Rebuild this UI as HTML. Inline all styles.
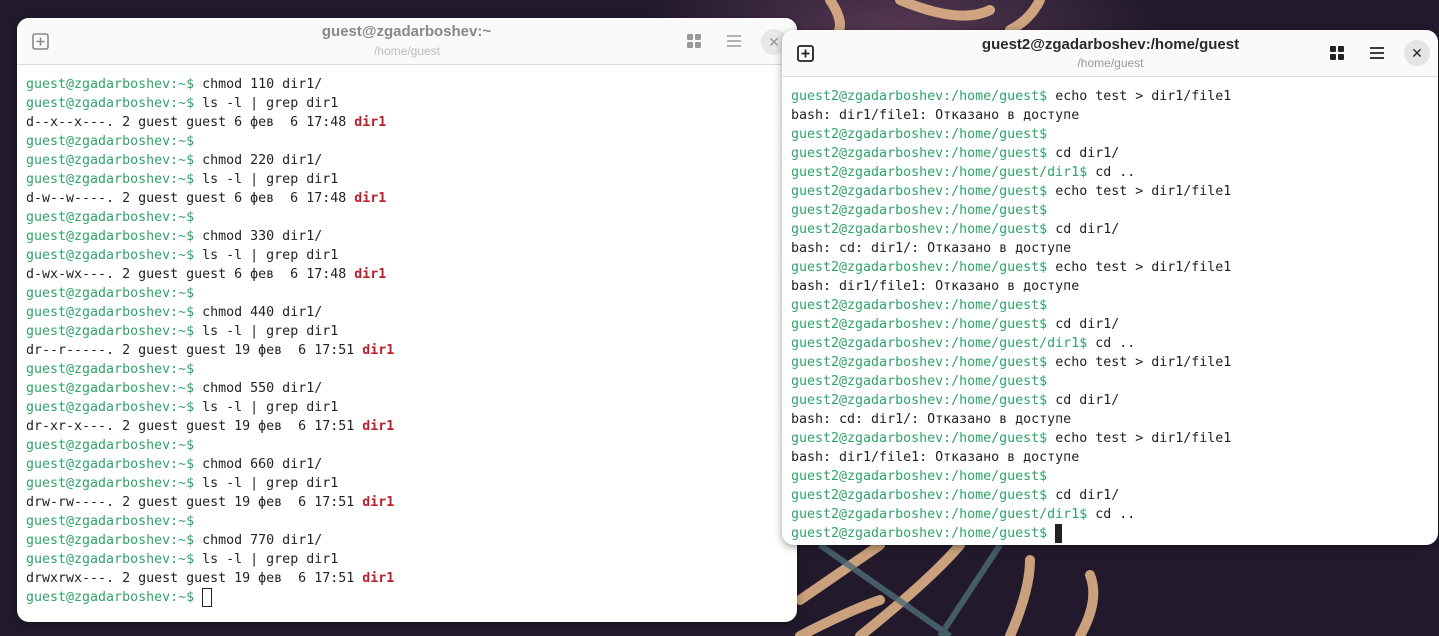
<!DOCTYPE html>
<html><head><meta charset="utf-8"><style>
*{margin:0;padding:0;box-sizing:border-box}
body{width:1439px;height:636px;overflow:hidden;background:#221a2c;position:relative;font-family:"Liberation Sans","DejaVu Sans",sans-serif}
.win{position:absolute;background:#fff;border-radius:12px;overflow:hidden;box-shadow:0 2px 8px rgba(0,0,0,.4)}
.hdr{position:absolute;left:0;right:0;top:0;background:#fafafa;border-bottom:1px solid #dcdcdc}
.t1{position:absolute;left:0;right:0;text-align:center;font-weight:bold;font-size:15px}
.t2{position:absolute;left:0;right:0;text-align:center;font-size:12px;color:#999}
.term{position:absolute;font-family:"DejaVu Sans Mono","Liberation Mono",monospace;font-size:13.3px;line-height:19px;color:#222;white-space:pre}
.g{color:#2ea36a}.r{color:#c01c28;font-weight:bold}
.ic{position:absolute}
</style></head><body>
<svg style="position:absolute;left:0;top:0" width="1439" height="636">
<defs><radialGradient id="a" cx="0.5" cy="0.5" r="0.5"><stop offset="0" stop-color="#5a3a55"/><stop offset="1" stop-color="#221a2c"/></radialGradient></defs>
<ellipse cx="900" cy="40" rx="260" ry="120" fill="url(#a)"/>
<g fill="none" stroke="#e8b98a" stroke-width="10" stroke-linecap="round" opacity=".85">
<path d="M830 0 Q850 30 830 40"/><path d="M900 0 Q960 25 990 10"/><path d="M1040 0 Q1030 20 1010 30"/>
<path d="M800 600 L880 545"/><path d="M860 636 Q930 580 960 545"/><path d="M1010 636 Q1030 590 1030 560"/><path d="M1080 636 Q1100 600 1090 575"/><path d="M800 636 Q850 610 880 600"/>
</g>
<g fill="none" stroke="#4d6c78" stroke-width="6" opacity=".8"><path d="M820 545 L950 636"/><path d="M1000 545 L940 636"/></g>
</svg>

<div class="win" style="left:17px;top:18px;width:780px;height:604px">
<div class="hdr" style="height:47px">
<svg class="ic" style="left:15px;top:15px" width="17" height="17"><rect x="1" y="1" width="15" height="15" rx="2" fill="none" stroke="#888" stroke-width="1.6"/><path d="M8.5 4.5v8M4.5 8.5h8" stroke="#888" stroke-width="1.6"/></svg>
<div class="t1" style="top:5px;color:#888;left:-1px">guest@zgadarboshev:~</div>
<div class="t2" style="top:26px;color:#bbb">/home/guest</div>
<svg class="ic" style="left:670px;top:16px" width="14" height="14" fill="#999"><rect x="0" y="0" width="6" height="6" rx="1"/><rect x="8" y="0" width="6" height="6" rx="1"/><rect x="0" y="8" width="6" height="6" rx="1"/><rect x="8" y="8" width="6" height="6" rx="1"/></svg>
<svg class="ic" style="left:710px;top:16px" width="14" height="14" stroke="#999" stroke-width="1.6"><path d="M0 2h14M0 7h14M0 12h14"/></svg>
<div class="ic" style="left:744px;top:11px;width:26px;height:26px;border-radius:13px;background:#e8e8e8;color:#999;font-size:14px;font-weight:bold;text-align:center;line-height:26px">✕</div>
</div>
<div class="term" style="left:9px;top:57px"><span class="g">guest@zgadarboshev:~$</span> chmod 110 dir1/
<span class="g">guest@zgadarboshev:~$</span> ls -l | grep dir1
d--x--x---. 2 guest guest 6 фев  6 17:48 <span class="r">dir1</span>
<span class="g">guest@zgadarboshev:~$</span>
<span class="g">guest@zgadarboshev:~$</span> chmod 220 dir1/
<span class="g">guest@zgadarboshev:~$</span> ls -l | grep dir1
d-w--w----. 2 guest guest 6 фев  6 17:48 <span class="r">dir1</span>
<span class="g">guest@zgadarboshev:~$</span>
<span class="g">guest@zgadarboshev:~$</span> chmod 330 dir1/
<span class="g">guest@zgadarboshev:~$</span> ls -l | grep dir1
d-wx-wx---. 2 guest guest 6 фев  6 17:48 <span class="r">dir1</span>
<span class="g">guest@zgadarboshev:~$</span>
<span class="g">guest@zgadarboshev:~$</span> chmod 440 dir1/
<span class="g">guest@zgadarboshev:~$</span> ls -l | grep dir1
dr--r-----. 2 guest guest 19 фев  6 17:51 <span class="r">dir1</span>
<span class="g">guest@zgadarboshev:~$</span>
<span class="g">guest@zgadarboshev:~$</span> chmod 550 dir1/
<span class="g">guest@zgadarboshev:~$</span> ls -l | grep dir1
dr-xr-x---. 2 guest guest 19 фев  6 17:51 <span class="r">dir1</span>
<span class="g">guest@zgadarboshev:~$</span>
<span class="g">guest@zgadarboshev:~$</span> chmod 660 dir1/
<span class="g">guest@zgadarboshev:~$</span> ls -l | grep dir1
drw-rw----. 2 guest guest 19 фев  6 17:51 <span class="r">dir1</span>
<span class="g">guest@zgadarboshev:~$</span>
<span class="g">guest@zgadarboshev:~$</span> chmod 770 dir1/
<span class="g">guest@zgadarboshev:~$</span> ls -l | grep dir1
drwxrwx---. 2 guest guest 19 фев  6 17:51 <span class="r">dir1</span>
<span class="g">guest@zgadarboshev:~$</span> <span style="display:inline-block;width:10px;height:19px;border:1px solid #222;vertical-align:top"></span></div>
</div>

<div class="win" style="left:782px;top:30px;width:656px;height:515px">
<div class="hdr" style="height:47px">
<svg class="ic" style="left:15px;top:15px" width="17" height="17"><rect x="1" y="1" width="15" height="15" rx="2" fill="none" stroke="#222" stroke-width="1.8"/><path d="M8.5 4.5v8M4.5 8.5h8" stroke="#222" stroke-width="1.8"/></svg>
<div class="t1" style="top:6px;color:#2a2a2a;width:657px">guest2@zgadarboshev:/home/guest</div>
<div class="t2" style="top:26px;width:657px">/home/guest</div>
<svg class="ic" style="left:548px;top:16px" width="14" height="14" fill="#222"><rect x="0" y="0" width="6" height="6" rx="1"/><rect x="8" y="0" width="6" height="6" rx="1"/><rect x="0" y="8" width="6" height="6" rx="1"/><rect x="8" y="8" width="6" height="6" rx="1"/></svg>
<svg class="ic" style="left:588px;top:16px" width="14" height="14" stroke="#222" stroke-width="1.8"><path d="M0 2h14M0 7h14M0 12h14"/></svg>
<div class="ic" style="left:622px;top:10px;width:26px;height:26px;border-radius:13px;background:#e4e4e4;color:#222;font-size:14px;font-weight:bold;text-align:center;line-height:26px">✕</div>
</div>
<div class="term" style="left:9px;top:57px"><span class="g">guest2@zgadarboshev:/home/guest$</span> echo test &gt; dir1/file1
bash: dir1/file1: Отказано в доступе
<span class="g">guest2@zgadarboshev:/home/guest$</span>
<span class="g">guest2@zgadarboshev:/home/guest$</span> cd dir1/
<span class="g">guest2@zgadarboshev:/home/guest/dir1$</span> cd ..
<span class="g">guest2@zgadarboshev:/home/guest$</span> echo test &gt; dir1/file1
<span class="g">guest2@zgadarboshev:/home/guest$</span>
<span class="g">guest2@zgadarboshev:/home/guest$</span> cd dir1/
bash: cd: dir1/: Отказано в доступе
<span class="g">guest2@zgadarboshev:/home/guest$</span> echo test &gt; dir1/file1
bash: dir1/file1: Отказано в доступе
<span class="g">guest2@zgadarboshev:/home/guest$</span>
<span class="g">guest2@zgadarboshev:/home/guest$</span> cd dir1/
<span class="g">guest2@zgadarboshev:/home/guest/dir1$</span> cd ..
<span class="g">guest2@zgadarboshev:/home/guest$</span> echo test &gt; dir1/file1
<span class="g">guest2@zgadarboshev:/home/guest$</span>
<span class="g">guest2@zgadarboshev:/home/guest$</span> cd dir1/
bash: cd: dir1/: Отказано в доступе
<span class="g">guest2@zgadarboshev:/home/guest$</span> echo test &gt; dir1/file1
bash: dir1/file1: Отказано в доступе
<span class="g">guest2@zgadarboshev:/home/guest$</span>
<span class="g">guest2@zgadarboshev:/home/guest$</span> cd dir1/
<span class="g">guest2@zgadarboshev:/home/guest/dir1$</span> cd ..
<span class="g">guest2@zgadarboshev:/home/guest$</span> <span style="display:inline-block;width:7px;height:19px;background:#222;vertical-align:top"></span></div>
</div>
</body></html>
